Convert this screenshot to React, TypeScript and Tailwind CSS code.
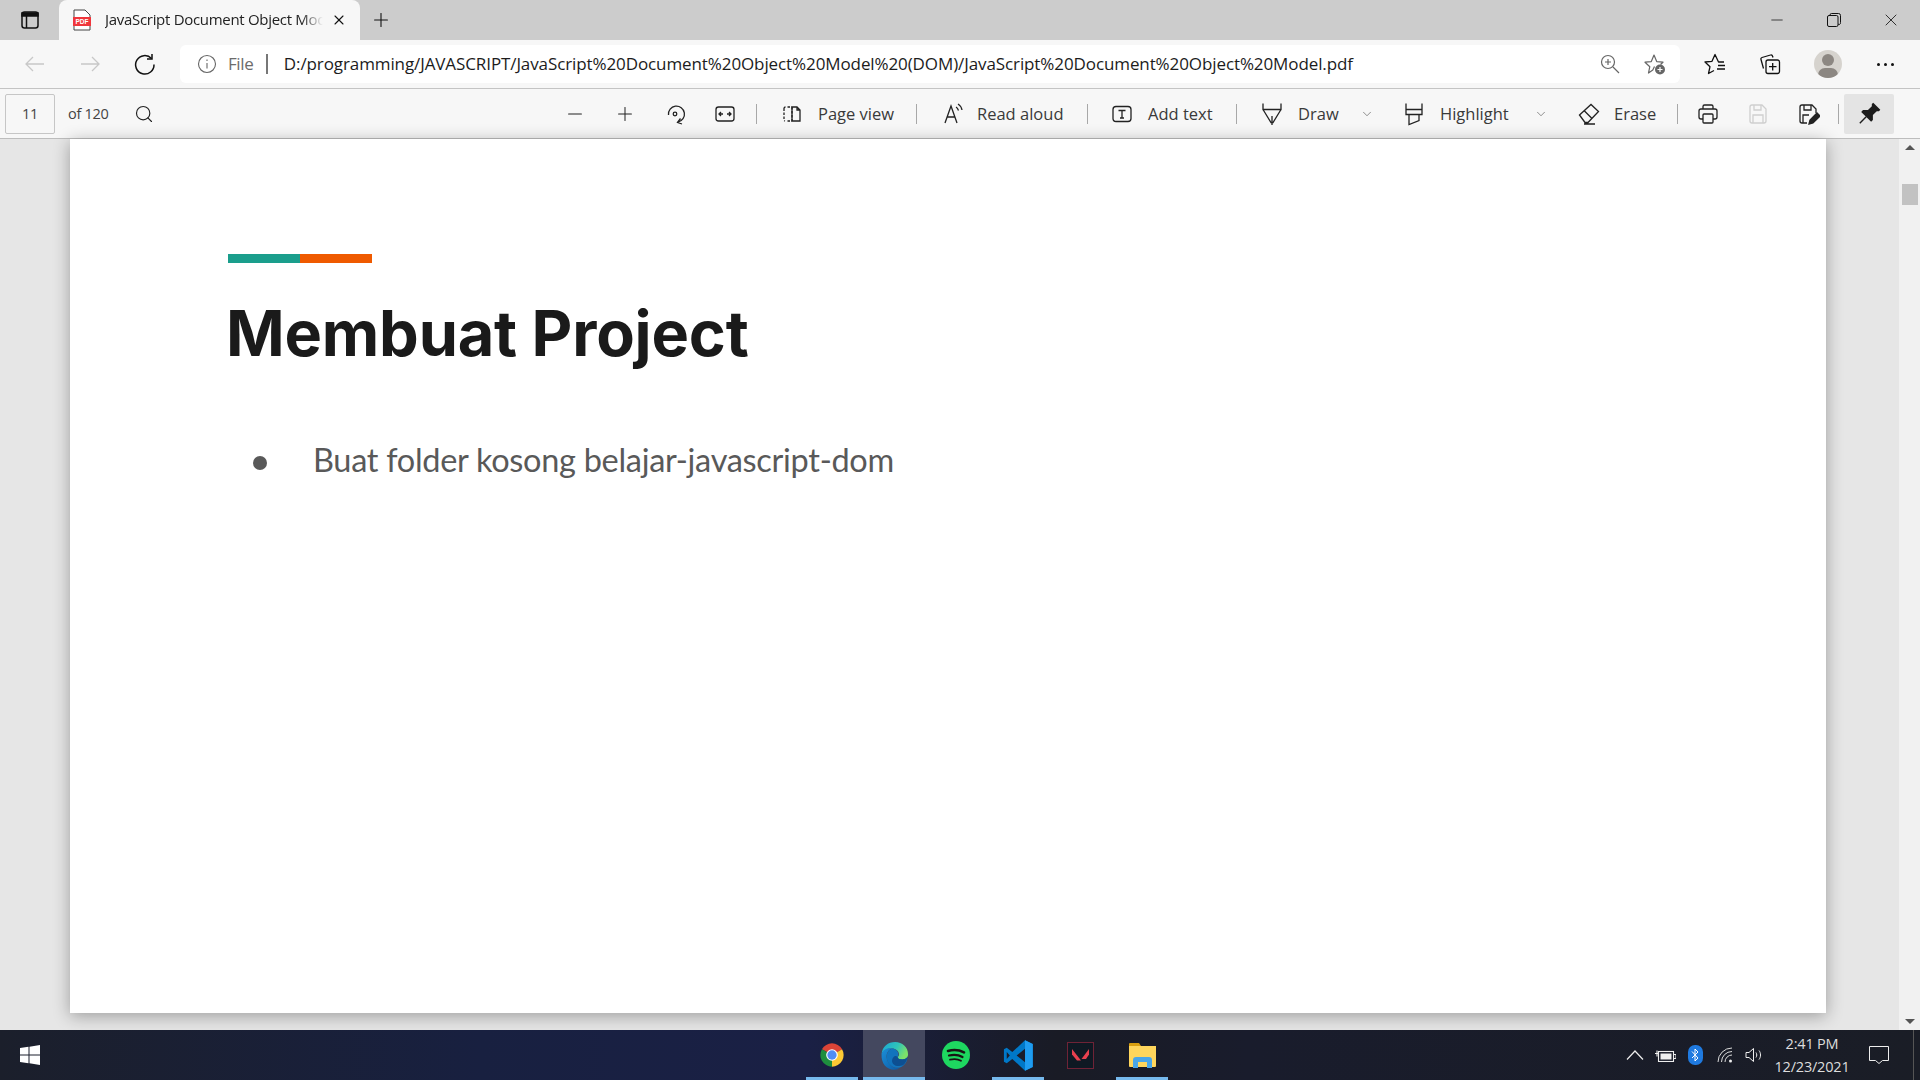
import { ChevronDown, Minus, Plus, Search, X } from 'lucide-react';
import { ReactNode } from 'react';

const segoe = "font-['Open_Sans','Noto_Sans',sans-serif]";

type IconProps = { children: ReactNode; size?: number; className?: string };

const Ico = ({ children, size = 24, className = 'text-[#222]' }: IconProps) => (
  <svg width={size} height={size} viewBox="0 0 24 24" fill="none" stroke="currentColor" strokeWidth="1.3" className={`shrink-0 ${className}`}>
    {children}
  </svg>
);

const Sep = ({ className = '' }: { className?: string }) => <div className={`w-px h-[20px] bg-[#a8a8a8] shrink-0 ${className}`} />;

const ToolBtn = ({ children, className = 'w-[50px]' }: { children: ReactNode; className?: string }) => (
  <div className={`flex items-center justify-center h-full shrink-0 ${className}`}>{children}</div>
);

const Label = ({ children, className = '' }: { children: ReactNode; className?: string }) => (
  <span className={`mt-[2px] text-[16.5px] text-[#3a3a3a] whitespace-nowrap shrink-0 ${className}`}>{children}</span>
);

const TaskIcon = ({ children, active, running }: { children: ReactNode; active?: boolean; running?: boolean }) => (
  <div className={`relative w-[62px] h-full flex items-center justify-center ${active ? 'bg-[#44485f]' : ''}`}>
    {children}
    {running && <div className={`absolute bottom-0 h-[3px] bg-[#76b9ed] ${active ? 'left-0 right-0' : 'left-[5px] right-[5px]'}`} />}
  </div>
);

const ChromeLogo = () => (
  <svg width="28" height="28" viewBox="0 0 48 48">
    <path d="M24 24 L6.7 14 A20 20 0 0 1 41.3 14 Z" fill="#db4437" />
    <path d="M24 24 L41.3 14 A20 20 0 0 1 24 44 Z" fill="#fcc934" />
    <path d="M24 24 L24 44 A20 20 0 0 1 6.7 14 Z" fill="#1e8e3e" />
    <circle cx="24" cy="24" r="10" fill="#fff" />
    <circle cx="24" cy="24" r="8" fill="#4f8df5" />
  </svg>
);

const EdgeLogo = () => (
  <svg width="31" height="31" viewBox="0 0 48 48">
    <defs>
      <linearGradient id="edgeTop" x1="0" y1="0" x2="1" y2="0.4">
        <stop offset="0" stopColor="#1aa4d8" />
        <stop offset="0.6" stopColor="#2fc5b8" />
        <stop offset="1" stopColor="#7ce06a" />
      </linearGradient>
      <linearGradient id="edgeBlue" x1="0" y1="0" x2="1" y2="1">
        <stop offset="0" stopColor="#1b8fd8" />
        <stop offset="1" stopColor="#0c59a4" />
      </linearGradient>
    </defs>
    <path d="M4 22C5 10 14 3 25 3c11 0 20 8 20 19 0 5-4 8-9 8-4 0-7-1-7-3 0-1 2-2 2-5 0-5-5-9-11-9C12 13 6 16 4 22z" fill="url(#edgeTop)" />
    <path d="M4 22C6 15 13 12 20 13c-6 2-9 8-8 15 1 8 8 16 19 16 1 0 2 0 3-1-3 2-7 3-11 3C12 46 3 36 4 22z" fill="url(#edgeBlue)" />
    <path d="M20 13c5 0 10 4 10 9 0 2-1 3-1 5 0 2 3 3 7 3 3 0 6-1 8-3-1 9-6 14-13 16-9 1-17-5-19-14-1-7 2-14 8-16z" fill="#1174bd" />
    <path d="M29 27c0 2 3 3 7 3 3 0 6-1 8-3-1 5-3 9-7 12-5 2-11 2-15-2-3-4-2-9 2-12 2-1 4 0 5 2z" fill="#0d4f91" />
  </svg>
);

const SpotifyLogo = () => (
  <svg width="28" height="28" viewBox="0 0 28 28">
    <circle cx="14" cy="14" r="14" fill="#1ed760" />
    <g fill="none" stroke="#191414" strokeLinecap="round">
      <path d="M6 10c5-1.500 11-1.200 16 1.300" strokeWidth="2.600" />
      <path d="M7 14.500c4.500-1.200 9.500-.8 13.500 1.500" strokeWidth="2.200" />
      <path d="M8 18.700c4-1 8-.7 11 1.100" strokeWidth="1.800" />
    </g>
  </svg>
);

const VsCodeLogo = () => (
  <svg width="31" height="31" viewBox="0 0 100 100">
    <path d="M71 99 96 87V13L71 1 30 39 12 25 3 30v40l9 5 18-14z" fill="#0078c8" />
    <path d="M71 1 96 13v74L71 99z" fill="#1f9cf0" />
    <path d="M71 28 44 50l27 22z" fill="#1a1c2a" />
    <path d="M12 39 22 50 12 61z" fill="#1a1c2a" />
  </svg>
);

const ValorantLogo = () => (
  <div className="w-[27px] h-[27px] bg-[#0f1923] border-[1px] border-[#6f2336] flex items-center justify-center">
    <svg width="17" height="14" viewBox="0 0 17 14">
      <path d="M0 1 9 12.500H5L0 6.500z" fill="#e8414f" />
      <path d="M17 1v5.500L14 11H9.500z" fill="#e8414f" />
    </svg>
  </div>
);

const ExplorerLogo = () => (
  <svg width="29" height="26" viewBox="0 0 29 26">
    <path d="M1 2a1 1 0 0 1 1-1h9l2 3h-12z" fill="#d99f10" />
    <path d="M1 4h27v20a1 1 0 0 1-1 1H2a1 1 0 0 1-1-1z" fill="#ffd65c" />
    <path d="M5 26v-8a3 3 0 0 1 3-3h13a3 3 0 0 1 3 3v8h-5v-6h-9v6z" fill="#4aa6e8" />
  </svg>
);

export default function App() {
  return (
    <div className={`w-[1920px] h-[1080px] overflow-hidden flex flex-col ${segoe}`}>
      {/* tab strip */}
      <div className="h-[40px] bg-[#cccccc] flex items-stretch shrink-0">
        <div className="w-[59px] flex items-center justify-center">
          <svg width="20" height="20" viewBox="0 0 20 20" fill="none" stroke="#111" strokeWidth="1.500">
            <rect x="2" y="2" width="16" height="16" rx="2.500" />
            <path d="M2 3h16v3H2z" fill="#111" />
            <path d="M6.500 6v12" />
          </svg>
        </div>
        <div className="w-[301px] bg-[#f7f7f7] rounded-t-[8px] flex items-center pl-[14px] pr-[12px]">
          <svg width="18" height="22" viewBox="0 0 18 22" className="shrink-0">
            <path d="M1 1h11l5 5v15H1z" fill="#fff" stroke="#444" strokeWidth="1" />
            <rect x="0" y="8" width="18" height="9" fill="#f0363c" />
            <text x="9" y="15" textAnchor="middle" fontSize="6.500" fontWeight="700" fill="#fff" fontFamily="Liberation Sans">PDF</text>
          </svg>
          <div className="ml-[14px] w-[218px] -mt-[2px] overflow-hidden whitespace-nowrap text-[15px] tracking-[-0.3px] text-[#222] [mask-image:linear-gradient(to_right,#000_90%,transparent)]">
            JavaScript Document Object Model
          </div>
          <X size={16} strokeWidth={1.6} className="ml-auto mr-[1px] text-[#111]" />
        </div>
        <div className="w-[42px] flex items-center justify-center">
          <Plus size={22} strokeWidth={1.2} className="text-[#111]" />
        </div>
        <div className="ml-auto flex items-center h-full pr-[1px]">
          <div className="w-[57px] flex justify-center"><Minus size={18} strokeWidth={1} className="text-[#111]" /></div>
          <div className="w-[57px] flex justify-center">
            <svg width="14" height="14" viewBox="0 0 14 14" fill="none" stroke="#111" strokeWidth="1">
              <rect x="0.500" y="2.500" width="10.500" height="11" rx="1.500" />
              <path d="M3 2.500V2a1.500 1.500 0 0 1 1.500-1.500h7A2 2 0 0 1 13.500 2.500v7A1.500 1.500 0 0 1 11 11" />
            </svg>
          </div>
          <div className="w-[57px] flex justify-center"><X size={20} strokeWidth={1} className="text-[#111]" /></div>
        </div>
      </div>

      {/* address row */}
      <div className="h-[49px] bg-[#f7f7f7] border-b border-[#c4c4c4] flex items-center shrink-0">
        <div className="w-[180px] flex items-center pl-[7px] shrink-0">
          <div className="w-[55px] flex justify-center">
            <Ico className="text-[#c8c8c8]"><path d="M21 12H3M10 5l-7 7 7 7" /></Ico>
          </div>
          <div className="w-[55px] flex justify-center">
            <Ico className="text-[#c8c8c8]"><path d="M3 12h18M14 5l7 7-7 7" /></Ico>
          </div>
          <div className="w-[55px] flex justify-center">
            <Ico className="text-[#111]">
              <path d="M18.500 6.500A9.200 9.200 0 1 0 21 12.500" strokeWidth="1.500" />
              <path d="M19 2v5h-5" strokeWidth="1.500" />
            </Ico>
          </div>
        </div>
        <div className="w-[1500px] h-[38px] bg-white rounded-[6px] flex items-center shrink-0">
          <svg width="20" height="20" viewBox="0 0 20 20" fill="none" stroke="#666" strokeWidth="1.100" className="ml-[17px]">
            <circle cx="10" cy="10" r="8.500" />
            <path d="M10 9v5.500M10 5.500v1.500" />
          </svg>
          <span className="ml-[11px] text-[17px] tracking-[-0.4px] text-[#6b6b6b]">File</span>
          <div className="w-[1.500px] h-[20px] bg-[#777] ml-[13px]" />
          <span className="ml-[16px] text-[17px] tracking-[-0.1px] text-[#1c1c1c] whitespace-nowrap">
            D:/programming/JAVASCRIPT/JavaScript%20Document%20Object%20Model%20(DOM)/JavaScript%20Document%20Object%20Model.pdf
          </span>
          <div className="ml-auto flex items-center pr-[3px]">
            <div className="w-[45px] flex justify-center">
              <svg width="20" height="20" viewBox="0 0 20 20" fill="none" stroke="#666" strokeWidth="1.200">
                <circle cx="8" cy="8" r="6.500" />
                <path d="M8 5v6M5 8h6M13 13l6 6" />
              </svg>
            </div>
            <div className="w-[45px] flex justify-center">
              <svg width="22" height="22" viewBox="0 0 22 22" fill="none" stroke="#666" strokeWidth="1.200">
                <path d="M10.500 13.500 8.800 17 4.500 20l1.300-6.300L1 9.200l6.300-.6L10 2l2.700 6.600 6.300.6-2.500 2.300" strokeLinejoin="round" />
                <circle cx="16" cy="16.500" r="5" fill="#666" stroke="none" />
                <path d="M16 14v5M13.500 16.500h5" stroke="#fff" />
              </svg>
            </div>
          </div>
        </div>
        <div className="flex items-center">
          <div className="w-[70px] flex justify-center">
            <svg width="22" height="22" viewBox="0 0 22 22" fill="none" stroke="#111" strokeWidth="1.300">
              <path d="M20 9h-5.500L11 1.500 8 8.300 1 9l5 4.700L4.500 20.500 10 17.500" strokeLinejoin="round" />
              <path d="M14 12.500h7M13 16h8" />
            </svg>
          </div>
          <div className="w-[40px] flex justify-center">
            <svg width="22" height="22" viewBox="0 0 22 22" fill="none" stroke="#111" strokeWidth="1.300">
              <rect x="7" y="7" width="13.500" height="13.500" rx="2" />
              <path d="M13.700 10v7.500M10 13.700h7.500" />
              <path d="M14 4.500l-.5-1.500a1.500 1.500 0 0 0-2-1L3 4.500A1.500 1.500 0 0 0 2 6.500l2.500 9" />
            </svg>
          </div>
          <div className="w-[75px] flex justify-center">
            <div className="relative w-[28px] h-[28px] rounded-full bg-[#d6d3ce] overflow-hidden">
              <div className="absolute left-[8px] top-[4px] w-[12px] h-[12px] rounded-full bg-[#8c8782]" />
              <div className="absolute left-[4px] top-[18px] w-[20px] h-[14px] rounded-full bg-[#8c8782]" />
            </div>
          </div>
          <div className="w-[40px] flex justify-center gap-[4px]">
            <div className="w-[3px] h-[3px] rounded-full bg-[#111]" />
            <div className="w-[3px] h-[3px] rounded-full bg-[#111]" />
            <div className="w-[3px] h-[3px] rounded-full bg-[#111]" />
          </div>
        </div>
      </div>

      {/* pdf toolbar */}
      <div className="h-[50px] bg-[#f7f7f7] border-b border-[#bdbdbd] flex items-center shrink-0">
        <div className="ml-[5px] w-[50px] h-[40px] border border-[#c6c6c6] rounded-[2px] flex items-center justify-center text-[14.5px] text-[#444] tracking-[-0.3px]">
          11
        </div>
        <span className="ml-[13px] mt-[1px] text-[14.5px] tracking-[-0.3px] text-[#444] whitespace-nowrap">of 120</span>
        <Search size={20} strokeWidth={1.400} className="ml-[26px] text-[#222]" />

        <div className="ml-auto h-full flex items-center pr-[26px]">
          <ToolBtn><Minus size={22} strokeWidth={1.100} className="text-[#222]" /></ToolBtn>
          <ToolBtn><Plus size={22} strokeWidth={1.100} className="text-[#222]" /></ToolBtn>
          <ToolBtn>
            <Ico>
              <path d="M5.500 13A8 8 0 1 1 15 20" />
              <circle cx="12" cy="12" r="1.800" />
              <path d="M17.500 16.500 14.500 20.500l4.500 1.500" />
            </Ico>
          </ToolBtn>
          <ToolBtn>
            <Ico>
              <rect x="3" y="5" width="18" height="14" rx="2.500" />
              <path d="M6 12h4M8 10l-2 2 2 2M14 12h4M16 10l2 2-2 2" />
            </Ico>
          </ToolBtn>
          <Sep className="ml-[6px]" />
          <Ico className="ml-[23px] text-[#222]">
            <path d="M4 6.500V17.500A1.500 1.500 0 0 0 5 19M4 6.500A1.500 1.500 0 0 1 5.500 5M12 5v14M7.500 5H12M7.500 19H12" strokeDasharray="2.500 1.500" />
            <path d="M12 5h5l3 3v11h-8zM17 5v3h3" />
          </Ico>
          <Label className="ml-[14px] w-[76px]">Page view</Label>
          <Sep className="ml-[22px]" />
          <Ico className="ml-[25px] text-[#222]">
            <path d="M3 21 9 4l6 17M5 15h8" />
            <path d="M14 5c1.500.8 2 2 2.500 3.500M16 2c2 1.200 3.500 3 4 6" />
          </Ico>
          <Label className="ml-[11px] w-[87px]">Read aloud</Label>
          <Sep className="ml-[23px]" />
          <Ico className="ml-[22px] text-[#222]">
            <rect x="3" y="4.500" width="18" height="15" rx="3" />
            <path d="M8.500 8.500h7M12 8.500v7.500M10 16h4" />
          </Ico>
          <Label className="ml-[14px] w-[65px]">Add text</Label>
          <Sep className="ml-[23px]" />
          <Ico className="ml-[23px] text-[#222]">
            <path d="M3 1.500v6h18v-6M3 7.500l8 13h2l8-13M12 14v9" />
          </Ico>
          <Label className="ml-[14px] w-[40px]">Draw</Label>
          <ChevronDown size={14} strokeWidth={1} className="ml-[22px] text-[#444] shrink-0" />
          <Ico className="ml-[28px] text-[#222]">
            <path d="M4 1.500v6h16v-6M4 7.500v5h16v-5M7 12.500v10l10-4v-6" />
          </Ico>
          <Label className="ml-[14px] w-[71px]">Highlight</Label>
          <ChevronDown size={14} strokeWidth={1} className="ml-[23px] text-[#444] shrink-0" />
          <Ico className="ml-[29px] text-[#222]">
            <path d="M2.500 13 14 2.500l7.500 7L11 20.500H8zM7 8.500l7.500 7.500M7 22h11" />
          </Ico>
          <Label className="ml-[13px] w-[40px]">Erase</Label>
          <Sep className="ml-[23px]" />
          <ToolBtn className="w-[50px] ml-[5px]">
            <Ico>
              <path d="M7 7V4.500A1.500 1.500 0 0 1 8.500 3h7A1.500 1.500 0 0 1 17 4.500V7M7 17H5a2 2 0 0 1-2-2V9a2 2 0 0 1 2-2h14a2 2 0 0 1 2 2v6a2 2 0 0 1-2 2h-2" />
              <rect x="7" y="12" width="10" height="9" rx="1" />
            </Ico>
          </ToolBtn>
          <ToolBtn>
            <Ico className="text-[#cfcfcf]">
              <path d="M4 5a2 2 0 0 1 2-2h10l4 4v12a2 2 0 0 1-2 2H6a2 2 0 0 1-2-2z" />
              <path d="M8 3v5h7V3M7 21v-8h10v8" />
            </Ico>
          </ToolBtn>
          <ToolBtn>
            <Ico>
              <path d="M11 21H6a2 2 0 0 1-2-2V5a2 2 0 0 1 2-2h10l4 4v4" />
              <path d="M8 3v5h7V3M7 21v-8h6" />
              <path d="M13 22l1-4 7-7 3 3-7 7z" fill="#222" />
            </Ico>
          </ToolBtn>
          <Sep className="ml-[5px]" />
          <div className="ml-[5px] w-[50px] h-[40px] bg-[#e4e4e4] rounded-[2px] flex items-center justify-center shrink-0">
            <svg width="24" height="24" viewBox="0 0 24 24" fill="#1c1c1c">
              <g transform="rotate(45 12 12)">
                <path d="M7 1h10v2l-1.500 1.500V10l3.500 3.500V16H5v-2.500L8.500 10V4.500L7 3z" />
                <path d="M11.300 16h1.400v9h-1.400z" />
              </g>
            </svg>
          </div>
        </div>
      </div>

      {/* document viewport */}
      <div className="flex-1 flex bg-[#e6e6e6] min-h-0">
        <div className="flex-1 min-w-0 pl-[70px]">
          <div className="w-[1756px] h-[874px] bg-white shadow-[0_3px_16px_rgba(0,0,0,0.32)] pl-[158px] pt-[115px]">
            <div className="flex h-[9px] w-[144px]">
              <div className="w-[72px] bg-[#1a9e8c]" />
              <div className="w-[72px] bg-[#ef5a00]" />
            </div>
            <h1 className="mt-[32px] -ml-[2px] font-['Inter',sans-serif] text-[63px] leading-[76px] font-bold tracking-[-0.2px] text-[#1a1a1a] whitespace-nowrap">Membuat Project</h1>
            <div className="mt-[67px] flex items-center font-['Lato',sans-serif]">
              <div className="ml-[25px] w-[14px] h-[14px] rounded-full bg-[#595959] mt-[6px] shrink-0" />
              <span className="ml-[46px] text-[32.5px] leading-[44px] text-[#595959] tracking-[-0.3px]">Buat folder kosong belajar-javascript-dom</span>
            </div>
          </div>
        </div>
        <div className="w-[21px] bg-[#f1f1f1] flex flex-col items-center justify-between py-[6px] relative">
          <div className="w-0 h-0 border-x-[5px] border-x-transparent border-b-[5px] border-b-[#555]" />
          <div className="absolute top-[45px] left-[3px] right-[2px] h-[21px] bg-[#c2c2c2]" />
          <div className="w-0 h-0 border-x-[5px] border-x-transparent border-t-[5px] border-t-[#555]" />
        </div>
      </div>

      {/* taskbar */}
      <div className="h-[50px] shrink-0 flex items-stretch bg-[linear-gradient(90deg,#1b1f2b_0%,#182040_25%,#1a2045_42%,#191b25_55%,#191c2c_65%,#1a1d26_100%)]">
        <div className="w-[60px] flex items-center justify-center">
          <svg width="20" height="20" viewBox="0 0 20 20" fill="#fff">
            <path d="M0 3 8.500 1.800V9.500H0zM9.500 1.700 20 0V9.500H9.500zM0 10.500h8.500V18.200L0 17zM9.500 10.500H20V20L9.500 18.300z" />
          </svg>
        </div>
        <div className="ml-[741px] flex items-stretch">
          <TaskIcon running><ChromeLogo /></TaskIcon>
          <TaskIcon active running><EdgeLogo /></TaskIcon>
          <TaskIcon><SpotifyLogo /></TaskIcon>
          <TaskIcon running><VsCodeLogo /></TaskIcon>
          <TaskIcon><ValorantLogo /></TaskIcon>
          <TaskIcon running><ExplorerLogo /></TaskIcon>
        </div>
        <div className="ml-auto flex items-center text-[#eee] pr-[6px]">
          <div className="w-[30px] flex justify-center">
            <svg width="18" height="10" viewBox="0 0 18 10" fill="none" stroke="#eee" strokeWidth="1.200"><path d="M1 9.500 9 1l8 8.500" /></svg>
          </div>
          <div className="w-[30px] flex justify-center">
            <svg width="21" height="13" viewBox="0 0 21 13" fill="none" stroke="#eee" strokeWidth="1.100">
              <rect x="3.500" y="2.500" width="15" height="10" />
              <rect x="5.500" y="4.500" width="11" height="6" fill="#eee" stroke="none" />
              <path d="M19 5.500h2v4h-2M0 4.500h3.500M2 1.500v6" />
            </svg>
          </div>
          <div className="w-[30px] flex justify-center">
            <div className="w-[15px] h-[20px] rounded-[7px] bg-[#1f7ae0] flex items-center justify-center">
              <svg width="8" height="14" viewBox="0 0 8 14" fill="none" stroke="#fff" strokeWidth="1"><path d="M1 3.500l6 6.500-3 3V1l3 3-6 6" /></svg>
            </div>
          </div>
          <div className="w-[30px] flex justify-center">
            <svg width="16" height="16" viewBox="0 0 16 16" fill="none" stroke="#ddd" strokeWidth="1">
              <path d="M1 15A14 14 0 0 1 15 1M4.500 15A10.500 10.500 0 0 1 15 4.500M8 15A7 7 0 0 1 15 8" />
              <circle cx="13.500" cy="14" r="1.500" fill="#eee" stroke="none" />
            </svg>
          </div>
          <div className="w-[30px] flex justify-center">
            <svg width="20" height="16" viewBox="0 0 20 16" fill="none" stroke="#eee" strokeWidth="1">
              <path d="M1 5.500h3L8.500 1.500v13L4 10.500H1zM11 5.500c1 1.500 1 3.500 0 5M14 3.500c2 2.500 2 6.500 0 9" />
            </svg>
          </div>
          <div className="w-[84px] text-center text-[14.5px] leading-[23px] tracking-[-0.2px] text-[#ddd]">
            <div>2:41 PM</div>
            <div>12/23/2021</div>
          </div>
          <div className="w-[59px] pl-[15px] flex justify-start">
            <svg width="20" height="20" viewBox="0 0 20 20" fill="none" stroke="#eee" strokeWidth="1">
              <path d="M.500 1.500h19v14h-6l-3.500 3-3.500-3h-6z" />
            </svg>
          </div>
          <div className="w-px h-full bg-[#555]" />
        </div>
      </div>
    </div>
  );
}
